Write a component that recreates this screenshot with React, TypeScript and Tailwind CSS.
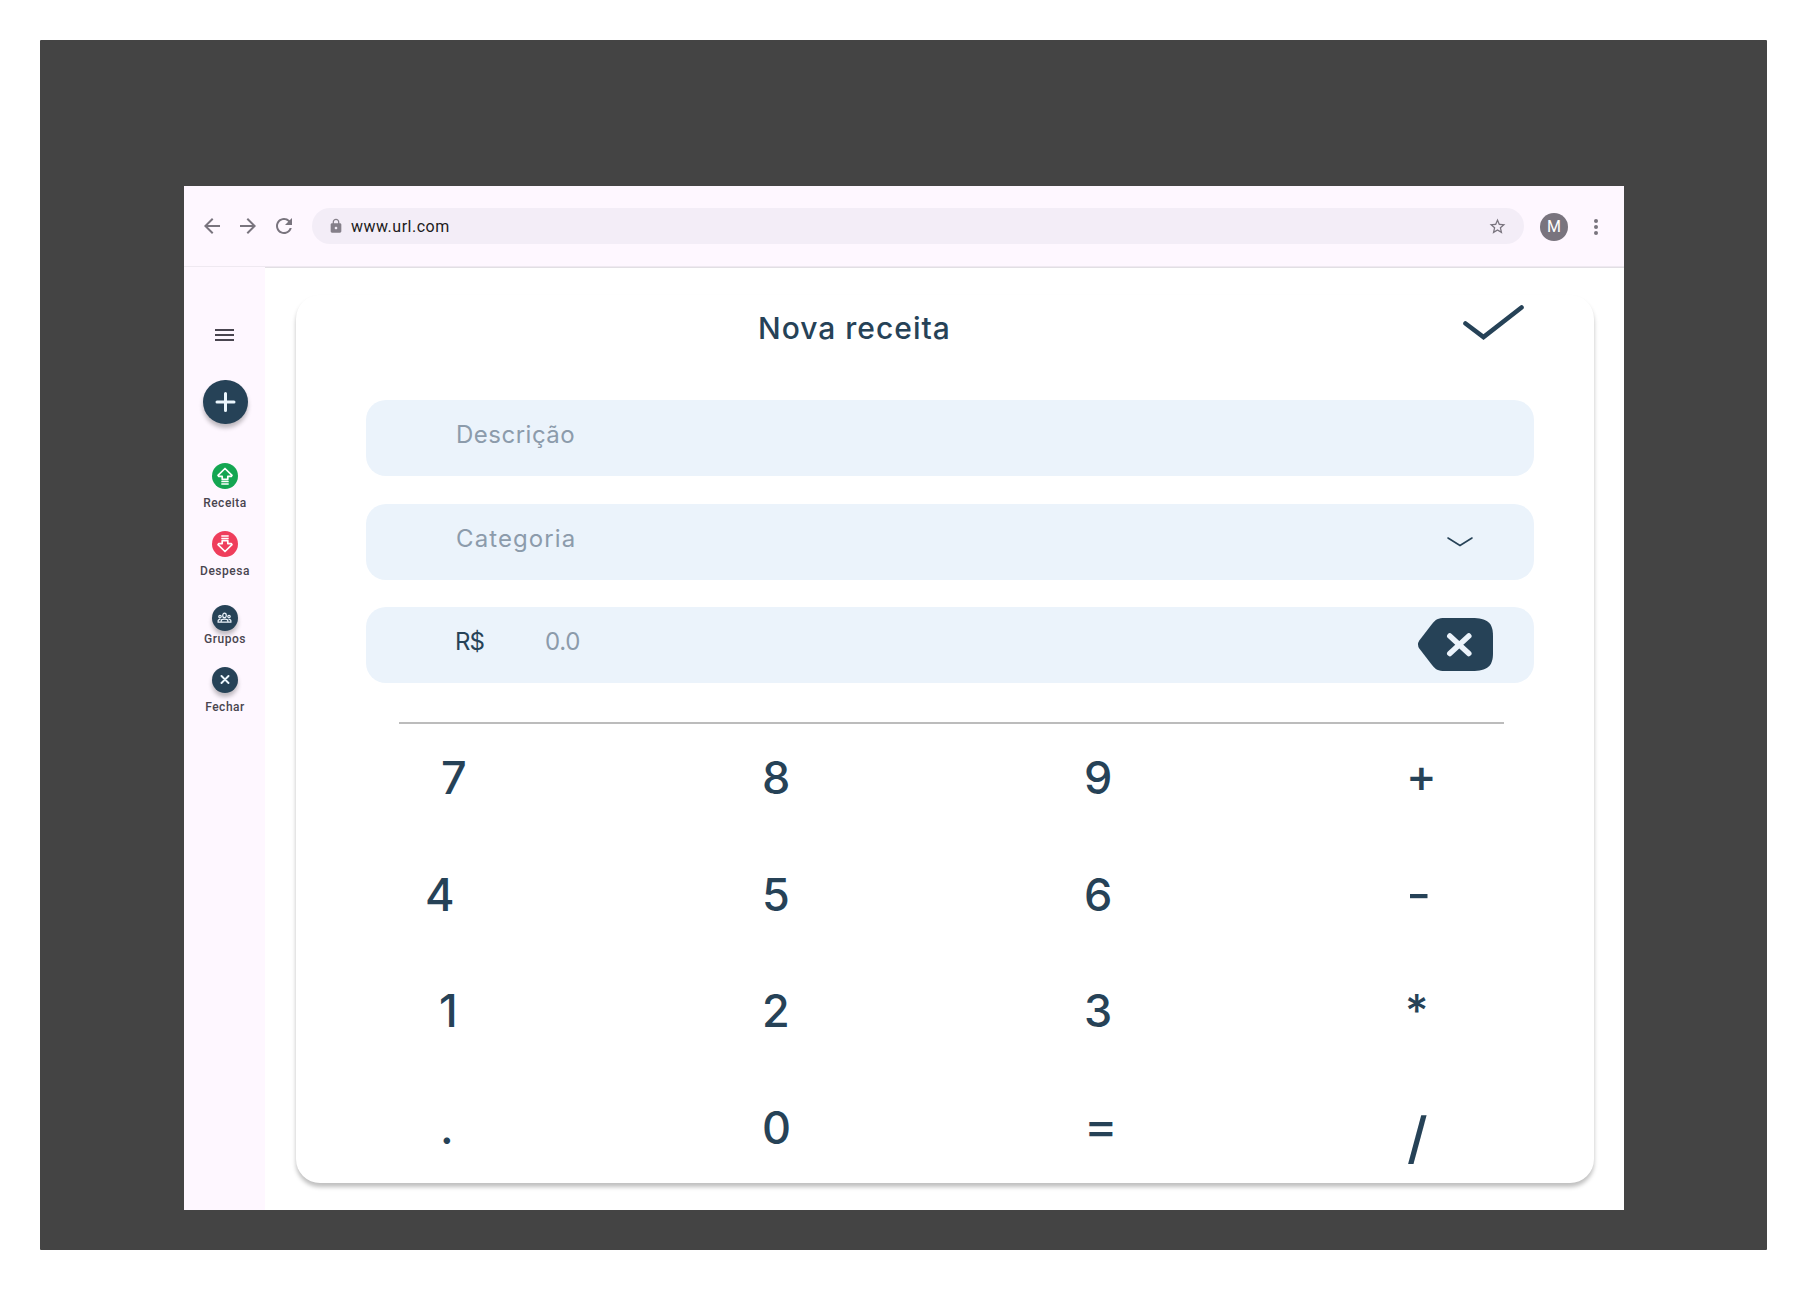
import type { ReactNode } from "react";
import { MdArrowBack, MdArrowForward, MdLock, MdRefresh, MdStarBorder } from "react-icons/md";

const keys: { label: string; className: string }[] = [
  { label: "7", className: "pl-[2px] text-[45px]" },
  { label: "8", className: "pl-px text-[45px]" },
  { label: "9", className: "pl-px text-[45px]" },
  { label: "+", className: "-mt-[3px] pl-px text-[46px]" },
  { label: "4", className: "-ml-[14px] text-[45px]" },
  { label: "5", className: "pl-px text-[45px]" },
  { label: "6", className: "pl-px text-[45px]" },
  { label: "-", className: "-mt-px origin-left scale-x-120 pl-px text-[45px]" },
  { label: "1", className: "text-[45px]" },
  { label: "2", className: "pl-px text-[45px]" },
  { label: "3", className: "pl-px text-[45px]" },
  { label: "*", className: "text-[45px]" },
  { label: ".", className: "pl-px text-[45px]" },
  { label: "0", className: "pl-px text-[45px]" },
  { label: "=", className: "-mt-[2px] origin-left scale-x-112 pl-px text-[45px]" },
  { label: "/", className: "pl-[2px] pt-[10px] text-[56px]" },
];

function TopBar() {
  return (
    <header className="flex h-[81px] shrink-0 items-center border-b border-[#efe9f1] bg-[#fef7ff] pl-4 text-[#79747e]">
      <MdArrowBack size={24} />
      <MdArrowForward size={24} className="ml-3" />
      <MdRefresh size={24} className="ml-3" />
      <div className="ml-4 flex h-9 w-[1212px] items-center rounded-full bg-[#f3edf7] pl-4 pr-[17px]">
        <MdLock size={16} className="opacity-90" />
        <span className="ml-[7px] pt-[2px] font-[Roboto] text-base leading-6 tracking-[0.5px] text-[#1d1b20]">www.url.com</span>
        <MdStarBorder size={19} className="ml-auto" />
      </div>
      <div className="ml-4 mt-px flex size-7 items-center justify-center rounded-full bg-[#79747e] pt-px font-[Roboto] text-base text-white">
        M
      </div>
      <div className="ml-[26px] mt-px flex flex-col gap-[2px]">
        <span className="size-1 rounded-full bg-[#79747e]" />
        <span className="size-1 rounded-full bg-[#79747e]" />
        <span className="size-1 rounded-full bg-[#79747e]" />
      </div>
    </header>
  );
}

function MoneyArrow({ down = false }: { down?: boolean }) {
  return (
    <svg width="18" height="18" viewBox="0 0 18 18" fill="none" stroke="white" strokeWidth="1.700" className={down ? "rotate-180" : ""}>
      <path d="M9 1.500 16 8.300 15.200 9.400H11.800V12.300H6.200V9.400H2.800L2 8.300Z" strokeLinejoin="round" />
      <path d="M5.300 14.500h7.400M5.300 16.900h7.400" strokeWidth="1.500" />
    </svg>
  );
}

function GroupIcon() {
  return (
    <svg width="15" height="12" viewBox="0 0 16 12" fill="none" stroke="#ebf3fb" strokeWidth="1.3">
      <ellipse cx="8" cy="3.300" rx="1.900" ry="2.400" />
      <circle cx="3.200" cy="4.500" r="1.300" />
      <circle cx="12.800" cy="4.500" r="1.300" />
      <path d="M4.400 10.400V9.200c0-1.200 1.200-1.900 3.600-1.900s3.600.7 3.600 1.900v1.200ZM4.200 10.400H1.200V9c0-.9.6-1.500 2.400-1.500M11.800 10.400h3V9c0-.9-.6-1.500-2.400-1.500" />
    </svg>
  );
}

function NavItem({ label, circle, text, children }: { label: string; circle: string; text: string; children: ReactNode }) {
  return (
    <button className="flex flex-col items-center">
      <span className={`flex size-[26px] items-center justify-center rounded-full ${circle}`}>{children}</span>
      <span className={`font-[Roboto] text-xs font-medium leading-4 tracking-[0.5px] text-[#49454f] ${text}`}>{label}</span>
    </button>
  );
}

function SideBar() {
  return (
    <nav className="flex w-[81px] shrink-0 flex-col items-center bg-[#fef7ff] pt-[61px]">
      <svg width="19" height="14" viewBox="0 0 19 14" stroke="#49454f" strokeWidth="1.900">
        <path d="M0 2h19M0 7h19M0 12h19" />
      </svg>
      <button className="ml-px mt-[38px] flex h-[44px] w-[45px] items-center justify-center rounded-full bg-[#264257] shadow-[0_4px_4px_rgba(0,0,0,0.25)]">
        <svg width="23" height="22" viewBox="0 0 23 22" stroke="#ebf6fd" strokeWidth="3" strokeLinecap="round">
          <path d="M11.500 2.500v17M3 11h17" />
        </svg>
      </button>
      <div className="ml-px mt-[39px] flex flex-col items-center">
        <NavItem label="Receita" circle="bg-[#14a652]" text="mt-[6px]">
          <MoneyArrow />
        </NavItem>
        <div className="h-5" />
        <NavItem label="Despesa" circle="bg-[#ef3e5c]" text="mt-[6px]">
          <MoneyArrow down />
        </NavItem>
        <div className="h-[26px]" />
        <NavItem label="Grupos" circle="bg-[#264257] shadow-[0_4px_4px_rgba(0,0,0,0.25)]" text="z-10">
          <GroupIcon />
        </NavItem>
        <div className="h-5" />
        <NavItem label="Fechar" circle="bg-[#264257] shadow-[0_4px_4px_rgba(0,0,0,0.25)]" text="mt-[6px]">
          <svg width="10" height="10" viewBox="0 0 10 10" stroke="#ebf6fd" strokeWidth="1.900" strokeLinecap="round">
            <path d="m1.500 1 7 7M8.500 1l-7 7" />
          </svg>
        </NavItem>
      </div>
    </nav>
  );
}

function Field({ children }: { children: ReactNode }) {
  return <div className="flex h-[76px] items-center rounded-[20px] bg-[#ebf3fb] pl-[90px]">{children}</div>;
}

export default function App() {
  return (
    <div className="h-[1290px] w-[1807px] bg-white p-10">
      <div className="h-[1210px] w-[1727px] rounded-[1px] bg-[#444444] pl-36 pt-[146px]">
        <div className="flex h-[1024px] w-[1440px] flex-col bg-white">
          <TopBar />
          <div className="flex min-h-0 flex-1">
            <SideBar />
            <main className="flex-1 border-t border-[#e2dfe4] pl-[31px] pt-[27px] font-[Inter] text-[#264257]">
              <section className="h-[888px] w-[1298px] rounded-3xl bg-white pl-[70px] shadow-[0_4px_4px_rgba(0,0,0,0.25)]">
                <div className="flex h-[105px] justify-between pl-[392px] pr-[70px]">
                  <h1 className="mt-[15px] whitespace-nowrap text-[30px] font-medium leading-9 tracking-[1px]">Nova receita</h1>
                  <svg width="62" height="36" viewBox="0 0 62 36" fill="none" stroke="#264257" strokeWidth="4.600" strokeLinecap="round" className="mt-[9px]">
                    <path d="M3.500 19.500 21.500 33 59.500 3.500" />
                  </svg>
                </div>
                <div className="flex w-[1168px] flex-col gap-[27.500px]">
                  <Field>
                    <span className="pb-[7px] text-2xl tracking-[0.500px] text-[#8c9bab]">Descrição</span>
                  </Field>
                  <Field>
                    <span className="pb-[6px] text-2xl tracking-[1.100px] text-[#8c9bab]">Categoria</span>
                    <svg width="28" height="12" viewBox="0 0 28 12" fill="none" stroke="#264257" strokeWidth="1.600" strokeLinecap="round" className="ml-auto mr-[60px]">
                      <path d="m2 2 12 7.500L26 2" />
                    </svg>
                  </Field>
                  <Field>
                    <span className="-ml-px w-[90px] pb-[7px] text-2xl tracking-[-1px]">R$</span>
                    <span className="pb-[7px] text-2xl tracking-[-0.300px] text-[#8c9bab]">0.0</span>
                    <svg width="75" height="53" viewBox="0 0 75 53" className="mb-[2px] ml-auto mr-[41px]">
                      <path
                        d="M1.300 22.500 14 6C17.500 1.500 20 0 27 0H54C69 0 75 4.500 75 18V35C75 48.500 69 53 54 53H27C20 53 17.500 51.500 14 47L1.300 30.500Q-1.300 26.500 1.300 22.500Z"
                        fill="#264257"
                      />
                      <path d="m31.800 18 19 17.500M50.800 18l-19 17.500" stroke="#ebf3fb" strokeWidth="5.500" strokeLinecap="round" />
                    </svg>
                  </Field>
                </div>
                <div className="ml-[33px] mt-[39px] h-[2px] w-[1105px] bg-[#bcbcbc]" />
                <div className="ml-[73px] mt-[25px] grid grid-cols-[322px_322px_322px_60px] gap-y-[58.600px]">
                  {keys.map((k) => (
                    <button key={k.label} className={`h-[58px] text-left font-medium leading-[58px] ${k.className}`}>
                      {k.label}
                    </button>
                  ))}
                </div>
              </section>
            </main>
          </div>
        </div>
      </div>
    </div>
  );
}
